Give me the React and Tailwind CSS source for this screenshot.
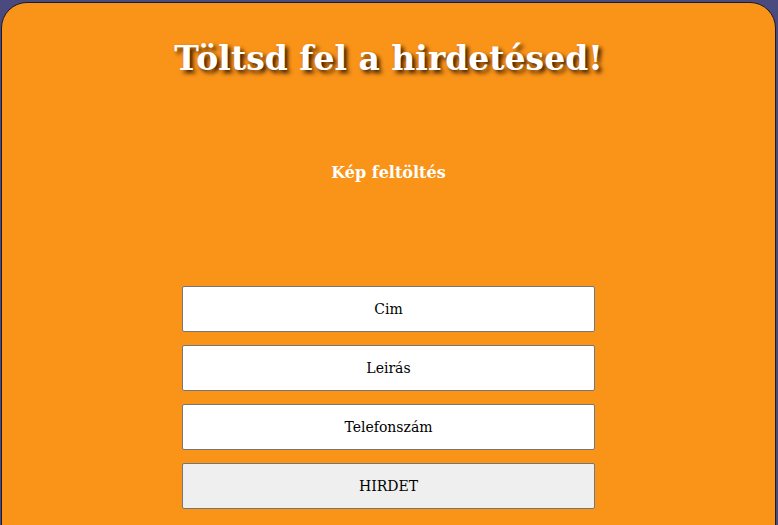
export default function App() {
  const fields = ["Cim", "Leirás", "Telefonszám"];
  return (
    <div className="h-[525px] overflow-hidden bg-[#4b4a7e] pt-[2px] pl-px pr-[2px] font-['DejaVu_Serif',serif]">
      <div className="h-[560px] rounded-[26px] border border-[#1a1a2a] bg-[#fa9419] flex flex-col items-center">
        <h1 className="mt-[36px] text-[33px] font-bold leading-[40px] text-white [text-shadow:3px_3px_4px_#3a1a00]">
          Töltsd fel a hirdetésed!
        </h1>
        <div className="mt-[82px] text-[16px] font-bold text-white leading-[24px]">Kép feltöltés</div>
        <div className="mt-[101px] flex flex-col gap-[13px]">
          {fields.map((f) => (
            <input
              key={f}
              placeholder={f}
              className="w-[413px] h-[46px] rounded-[2px] border border-[#767676] bg-white text-center text-[14px] text-black placeholder:text-black outline-none"
            />
          ))}
          <button className="w-[413px] h-[46px] rounded-[2px] border border-[#767676] bg-[#efefef] text-center text-[14px] text-black">
            HIRDET
          </button>
        </div>
      </div>
    </div>
  );
}
